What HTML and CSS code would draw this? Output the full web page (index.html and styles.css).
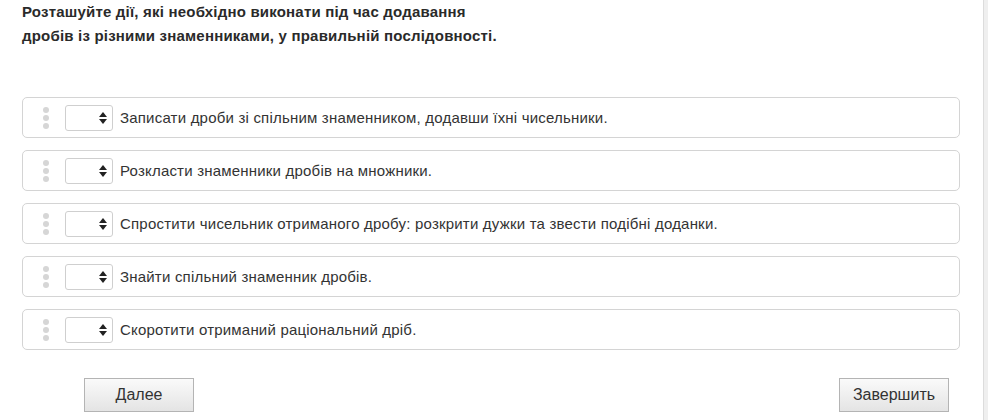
FILE: index.html
```html
<!DOCTYPE html>
<html lang="uk">
<head>
  <meta charset="UTF-8" />
  <title>Впорядкування</title>
  <link rel="stylesheet" href="styles.css">
</head>
<body>
  <div class="page">
    <div class="question">
      <p class="prompt">Розташуйте дії, які необхідно виконати під час додавання<br>дробів із різними знаменниками, у правильній послідовності.</p>
      <ul class="order-list">
        <li class="order-item">
          <span class="handle"><i></i><i></i><i></i></span>
          <span class="picker"><span class="arrows"></span></span>
          <span class="label">Записати дроби зі спільним знаменником, додавши їхні чисельники.</span>
        </li>
        <li class="order-item">
          <span class="handle"><i></i><i></i><i></i></span>
          <span class="picker"><span class="arrows"></span></span>
          <span class="label">Розкласти знаменники дробів на множники.</span>
        </li>
        <li class="order-item">
          <span class="handle"><i></i><i></i><i></i></span>
          <span class="picker"><span class="arrows"></span></span>
          <span class="label">Спростити чисельник отриманого дробу: розкрити дужки та звести подібні доданки.</span>
        </li>
        <li class="order-item">
          <span class="handle"><i></i><i></i><i></i></span>
          <span class="picker"><span class="arrows"></span></span>
          <span class="label">Знайти спільний знаменник дробів.</span>
        </li>
        <li class="order-item">
          <span class="handle"><i></i><i></i><i></i></span>
          <span class="picker"><span class="arrows"></span></span>
          <span class="label">Скоротити отриманий раціональний дріб.</span>
        </li>
      </ul>
      <div class="nav">
        <button class="btn">Далее</button>
        <button class="btn">Завершить</button>
      </div>
    </div>
    <div class="scroll-edge"></div>
  </div>
</body>
</html>
```

FILE: styles.css
```css
body {
  margin: 0;
  padding: 0;
  font-family: 'Liberation Sans', Arial, sans-serif;
  background-color: #fff;
  color: #333;
  overflow: hidden;
}
.page {
  display: flex;
  height: 420px;
}
.question {
  flex: 1;
  padding: 0 23px 0 22px;
}
.prompt {
  margin: 0;
  font-size: 15px;
  letter-spacing: 0.2px;
  font-weight: bold;
  line-height: 24px;
  color: #2a2a2a;
}
.order-list {
  list-style: none;
  margin: 49px 0 0;
  padding: 0;
  display: flex;
  flex-direction: column;
  gap: 12px;
}
.order-item {
  height: 39px;
  border: 1px solid #d4d4d4;
  border-radius: 5px;
  display: flex;
  align-items: center;
}
.handle {
  width: 6px;
  margin-left: 20px;
  display: flex;
  flex-direction: column;
  gap: 2px;
}
.handle i {
  width: 6px;
  height: 6px;
  border-radius: 50%;
  background-color: #d6d6d6;
}
.picker {
  width: 46px;
  height: 24px;
  margin-left: 16px;
  border: 1px solid #cfcfcf;
  border-radius: 3px;
  position: relative;
}
.arrows {
  position: absolute;
  right: 5px;
  top: 6px;
  width: 8px;
  height: 12px;
}
.arrows::before,
.arrows::after {
  content: '';
  position: absolute;
  left: 0;
  border-left: 4px solid transparent;
  border-right: 4px solid transparent;
}
.arrows::before {
  top: 0;
  border-bottom: 5px solid #222;
}
.arrows::after {
  bottom: 0;
  border-top: 5px solid #222;
}
.label {
  margin-left: 7px;
  font-size: 15px;
  letter-spacing: 0.2px;
  color: #333;
}
.nav {
  display: flex;
  justify-content: space-between;
  margin-top: 28px;
  padding: 0 11px 0 62px;
}
.btn {
  width: 110px;
  height: 34px;
  font-family: 'Liberation Sans', Arial, sans-serif;
  font-size: 16px;
  color: #333;
  background: linear-gradient(#fafafa, #e4e4e4);
  border: 1px solid #b4b4b4;
  border-radius: 0;
  padding: 0;
}
.scroll-edge {
  width: 4px;
  border-left: 1px solid #dcdcdc;
  background-color: #efefef;
}
```
